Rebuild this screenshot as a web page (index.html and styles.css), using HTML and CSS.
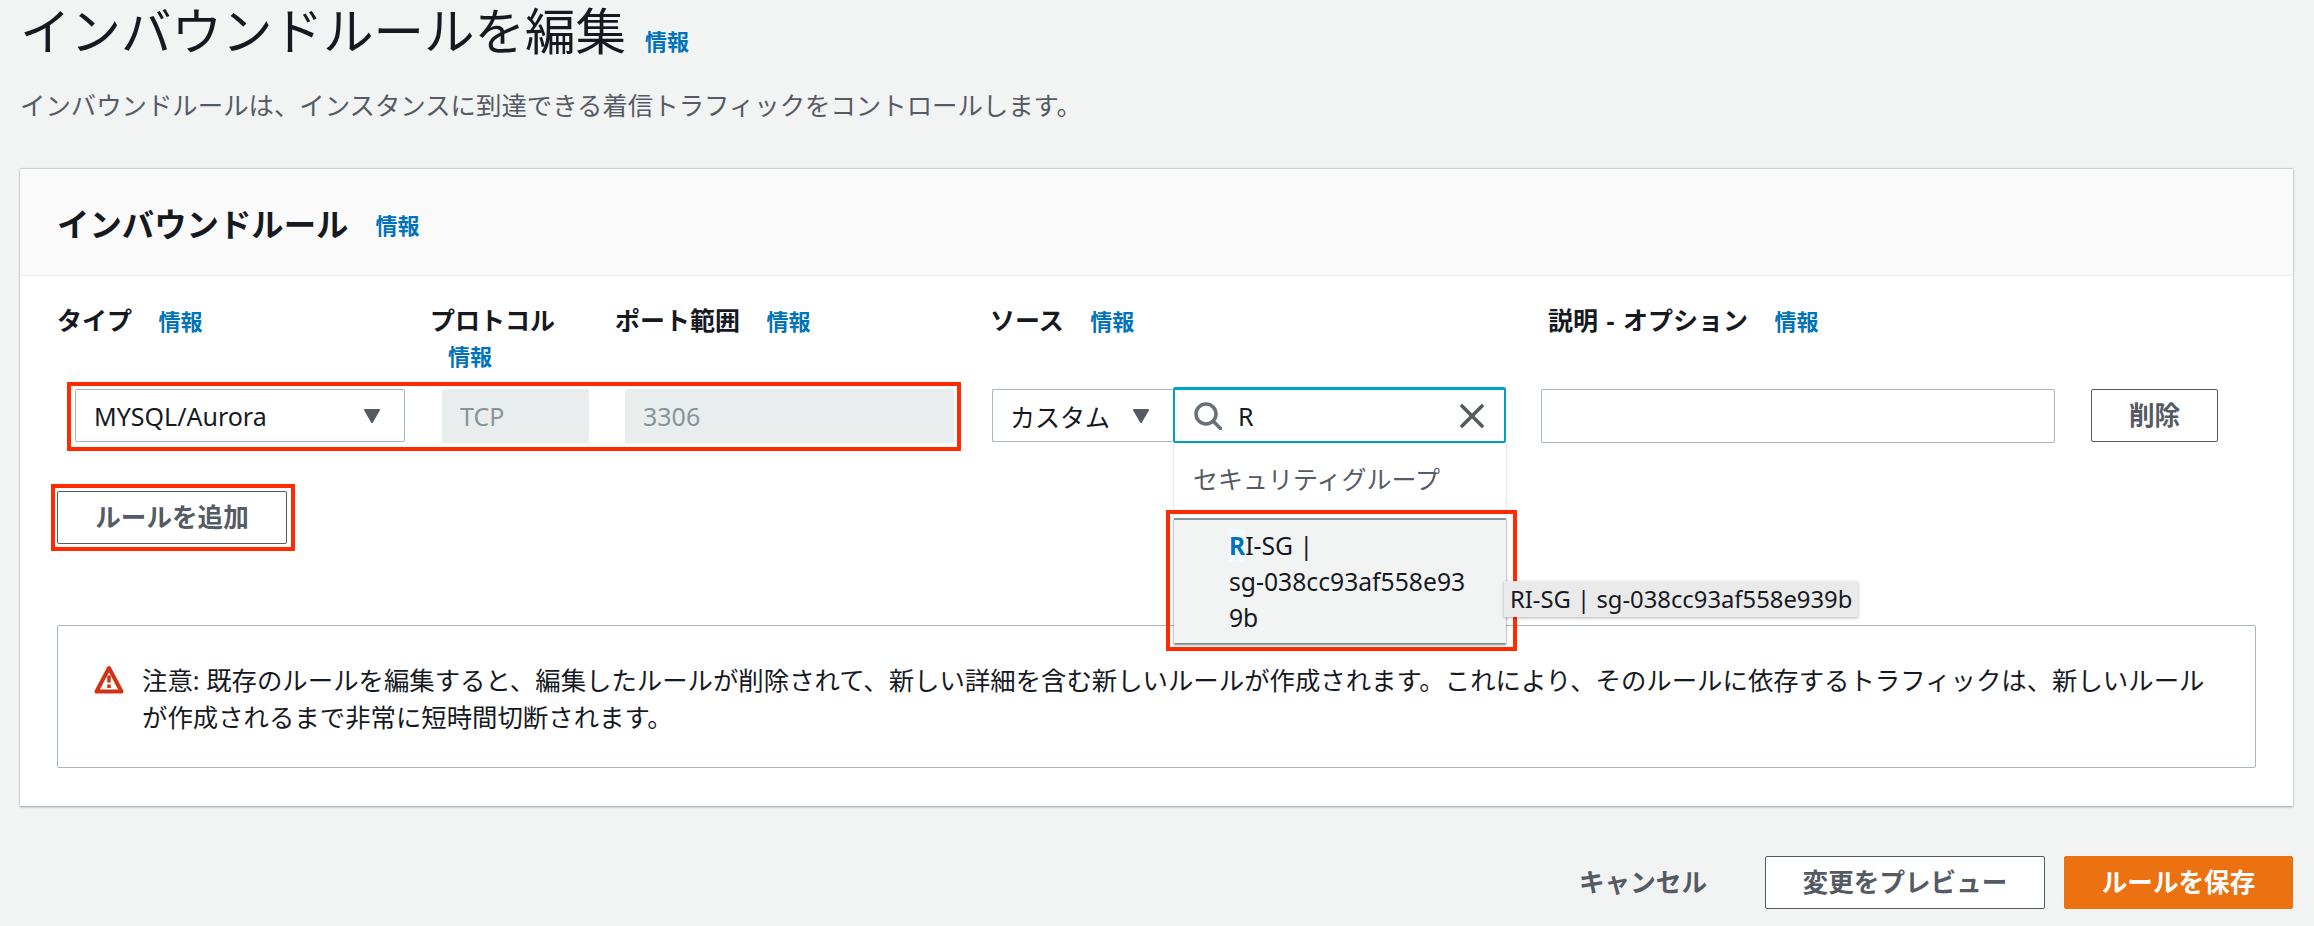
FILE: index.html
```html
<!DOCTYPE html>
<html lang="ja">
<head>
  <meta charset="UTF-8" />
  <title>インバウンドルールを編集</title>
  <link rel="stylesheet" href="styles.css">
</head>
<body>
  <h1>インバウンドルールを編集<a class="info info-title" href="#">情報</a></h1>
  <p class="intro">インバウンドルールは、インスタンスに到達できる着信トラフィックをコントロールします。</p>

  <section class="card">
    <header class="card-head">
      <h2>インバウンドルール</h2><a class="info info-head" href="#">情報</a>
    </header>

    <div class="card-body">
      <div class="labels">
        <div class="label">タイプ <a class="info" href="#">情報</a></div>
        <div class="label">プロトコル <a class="info" href="#">情報</a></div>
        <div class="label">ポート範囲 <a class="info" href="#">情報</a></div>
        <div class="label">ソース <a class="info" href="#">情報</a></div>
        <div class="label">説明 - オプション <a class="info" href="#">情報</a></div>
      </div>

      <div class="rule">
        <span class="mark mark-rule"></span>
        <div class="select select-type">MYSQL/Aurora
          <svg class="caret" viewBox="0 0 20 16"><path d="M3 2h14l-7 12z" /></svg>
        </div>
        <div class="readonly readonly-proto">TCP</div>
        <div class="readonly readonly-port">3306</div>
        <div class="source">
          <div class="select select-source">カスタム
            <svg class="caret" viewBox="0 0 20 16"><path d="M3 2h14l-7 12z" /></svg>
          </div>
          <div class="search">
            <svg class="icon-search" viewBox="0 0 28 28"><circle cx="12" cy="12" r="10" /><path d="M19.5 19.5l7 7" /></svg>
            <span class="search-text">R</span>
            <svg class="icon-clear" viewBox="0 0 24 24"><path d="M2 2l20 20M22 2L2 22" /></svg>
            <div class="dropdown">
              <div class="group">セキュリティグループ</div>
              <div class="option">
                <span class="mark mark-option"></span>
                <b class="hit">R</b>I-SG | <span class="sg-id">sg-038cc93af558e939b</span>
                <div class="tooltip">RI-SG | sg-038cc93af558e939b</div>
              </div>
            </div>
          </div>
        </div>
        <input class="desc" type="text">
        <button class="btn btn-delete">削除</button>
      </div>

      <div class="add-wrap">
        <button class="btn btn-add">ルールを追加<span class="mark mark-add"></span></button>
      </div>

      <div class="alert">
        <svg class="icon-warn" viewBox="0 0 30 29">
          <path class="warn-edge" d="M15 3L2.5 26.5h25z" />
          <path class="warn-mark" d="M15 10.5v7M15 19.5v3.5" />
        </svg>
        <p>注意: 既存のルールを編集すると、編集したルールが削除されて、新しい詳細を含む新しいルールが作成されます。これにより、そのルールに依存するトラフィックは、新しいルールが作成されるまで非常に短時間切断されます。</p>
      </div>
    </div>
  </section>

  <footer class="actions">
    <button class="btn-link">キャンセル</button>
    <button class="btn btn-preview">変更をプレビュー</button>
    <button class="btn btn-save">ルールを保存</button>
  </footer>
</body>
</html>
```

FILE: styles.css
```css
* { box-sizing: border-box; }
html, body { height: 100%; }
body {
  margin: 0;
  padding: 0 21px 0 20px;
  background: #f2f3f3;
  color: #16191f;
  font-family: "Noto Sans", "Noto Sans CJK JP", sans-serif;
  font-size: 25px;
  overflow: hidden;
}
h1 {
  margin: 0;
  height: 62px;
  font-size: 50.5px;
  font-weight: 400;
  line-height: 62px;
}
.intro {
  margin: 24px 0 0;
  height: 38px;
  color: #545b64;
  font-size: 25.4px;
  line-height: 38px;
}
.info {
  display: inline-block;
  margin-left: 18px;
  color: #0073bb;
  font-size: 22px;
  font-weight: 700;
  text-decoration: none;
  word-spacing: 0;
}
.info-title { margin-left: 19px; }
.info-head { margin-left: 27px; position: relative; top: 2px; }

.card {
  margin-top: 45px;
  height: 637px;
  background: #fff;
  box-shadow: 0 1px 2px rgba(0,28,36,0.4), 0 -1px 1px rgba(0,28,36,0.12);
}
.card-head {
  display: flex;
  align-items: center;
  height: 107px;
  padding-left: 37px;
  background: #fafafa;
  border-bottom: 1px solid #eaeded;
}
h2 {
  margin: 0;
  font-size: 32.4px;
  font-weight: 700;
}
.card-body { padding: 27px 37px 0; }

.labels {
  display: grid;
  grid-template-columns: 373px 185px 375px 558px 1fr;
  height: 86px;
}
.label {
  font-size: 25px;
  font-weight: 700;
  line-height: 35px;
  word-spacing: 2px;
}

.rule {
  position: relative;
  display: grid;
  grid-template-columns: 367px 183px 367px 549px 550px 165px;
  height: 54px;
  padding-left: 18px;
}
.mark {
  position: absolute;
  border: 4px solid #ff2a00;
  pointer-events: none;
}
.mark-rule { left: 10px; top: -7px; width: 894px; height: 69px; }
.mark-add { top: -8px; bottom: -8px; left: -7px; right: -9px; }
.mark-option { top: -10px; bottom: -8px; left: -8px; right: -11px; }

.select {
  display: flex;
  align-items: center;
  justify-content: space-between;
  height: 53px;
  background: #fff;
  border: 1px solid #aab7b8;
  border-radius: 2px;
  white-space: nowrap;
}
.select-type { width: 330px; padding: 0 22px 0 18px; }
.select-source { width: 181px; padding: 0 22px 0 17px; border-right: 0; }
.caret {
  width: 20px;
  height: 16px;
  fill: #545b64;
  stroke: #545b64;
  stroke-width: 2;
  stroke-linejoin: round;
}

.readonly {
  height: 54px;
  padding-left: 18px;
  background: #eaeded;
  border-radius: 2px;
  color: #879596;
  line-height: 54px;
}
.readonly-proto { width: 147px; }
.readonly-port { width: 329px; }

.source { display: flex; align-items: flex-start; }
.search {
  position: relative;
  display: flex;
  align-items: center;
  width: 333px;
  height: 56px;
  margin-top: -2px;
  padding: 0 20px 0 19px;
  background: #fff;
  border: 2px solid #00a1c9;
  border-top-width: 3px;
  border-radius: 2px;
}
.icon-search { width: 28px; height: 28px; fill: none; stroke: #687078; stroke-width: 3.5; stroke-linecap: round; }
.search-text { margin-left: 16px; flex: 1; }
.icon-clear { width: 24px; height: 24px; fill: none; stroke: #545b64; stroke-width: 3.6; stroke-linecap: round; }

.dropdown {
  position: absolute;
  z-index: 2;
  left: -1px;
  top: calc(100% + 2px);
  width: 332px;
  background: #fff;
  box-shadow: 0 1px 2px rgba(0,28,36,0.3);
}
.group {
  height: 75px;
  padding-left: 19px;
  color: #545b64;
  line-height: 73px;
}
.option {
  position: relative;
  height: 125px;
  padding: 8px 28px 0 55px;
  background: #f2f3f3;
  border-top: 2px solid #879596;
  box-shadow: 0 2px 2px rgba(0,28,36,0.45);
  font-size: 24.7px;
  line-height: 36px;
}
.sg-id {
  display: block;
  word-break: break-all;
}
.hit {
  color: #0073bb;
  background: #f1faff;
}
.tooltip {
  position: absolute;
  left: 330px;
  top: 61px;
  padding: 0 6px;
  height: 36px;
  background: #eaeaea;
  box-shadow: 0 1px 3px rgba(0,0,0,0.3);
  font-size: 23.8px;
  line-height: 36px;
  white-space: nowrap;
}

.desc {
  display: block;
  width: 514px;
  height: 54px;
  background: #fff;
  border: 1px solid #aab7b8;
  border-radius: 2px;
}

.btn {
  height: 53px;
  padding: 0 0 3px;
  background: #fff;
  border: 1px solid #545b64;
  border-radius: 2px;
  color: #545b64;
  font-family: inherit;
  font-size: 25.6px;
  font-weight: 700;
}
.btn-delete { width: 127px; }
.add-wrap { margin-top: 48px; height: 53px; }
.btn-add { position: relative; width: 230px; }

.alert {
  display: flex;
  align-items: flex-start;
  margin-top: 81px;
  height: 143px;
  padding: 36px 36px 0;
  border: 1px solid #aab7b8;
  border-radius: 2px;
}
.icon-warn { flex: none; width: 30px; height: 29px; margin: 3px 18px 0 0; }
.warn-edge { fill: none; stroke: #d13212; stroke-width: 4; stroke-linejoin: round; }
.warn-mark { fill: none; stroke: #d13212; stroke-width: 3.5; }
.alert p {
  margin: 0;
  width: 2072px;
  font-size: 25.4px;
  line-height: 37px;
}

.actions {
  display: flex;
  justify-content: flex-end;
  align-items: center;
  gap: 19px;
  margin-top: 50px;
}
.btn-link {
  margin-right: 39px;
  padding: 0 0 3px;
  background: none;
  border: 0;
  color: #545b64;
  font-family: inherit;
  font-size: 25.6px;
  font-weight: 700;
}
.btn-preview { width: 280px; }
.btn-save {
  width: 229px;
  background: #ec7211;
  border-color: #ec7211;
  color: #fff;
}
```
